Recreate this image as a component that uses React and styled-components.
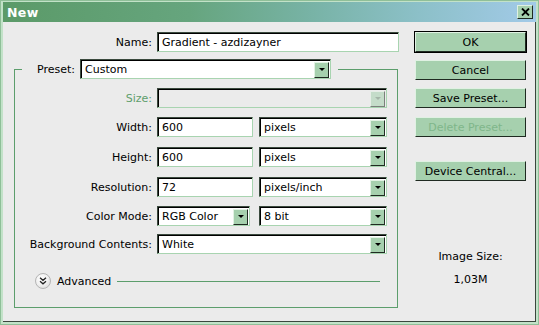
import React from 'react';
import styled, { createGlobalStyle } from 'styled-components';

const GlobalStyle = createGlobalStyle`
  html, body {
    margin: 0;
    padding: 0;
    background: #ebebeb;
  }
  body {
    font-family: "DejaVu Sans", "Liberation Sans", sans-serif;
    font-size: 11px;
    color: #000;
  }
`;

const Window = styled.div`
  width: 539px;
  height: 325px;
  box-sizing: border-box;
  border: 1px solid #8fbf98;
  background: #c2e2c8;
  padding: 1px 2px 2px 2px;
  display: flex;
  flex-direction: column;
`;

const TitleBar = styled.div`
  height: 20px;
  flex: none;
  display: flex;
  align-items: center;
  padding: 0 3px 0 4px;
  background: linear-gradient(to right, #5b9a68 0%, #66a57e 35%, #78b3a6 58%, #8cc0c8 78%, #a2cae8 100%);
`;

const Title = styled.span`
  flex: 1;
  color: #fff;
  font-weight: bold;
  font-size: 12.5px;
  letter-spacing: 0.4px;
`;

const CloseBox = styled.div`
  width: 16px;
  height: 14px;
  box-sizing: border-box;
  background: #a6d0ae;
  border: 1px solid;
  border-color: #dff0e2 #1f2a21 #1f2a21 #dff0e2;
  display: flex;
  align-items: center;
  justify-content: center;
`;

const Body = styled.div`
  flex: 1;
  display: flex;
  background: #ebebeb;
  border-right: 1px solid #3a463c;
  border-bottom: 1px solid #3a463c;
`;

const LeftPane = styled.div`
  width: 397px;
  padding-top: 10px;
  display: flex;
  flex-direction: column;
`;

const RightPane = styled.div`
  flex: 1;
  padding: 10px 0 0 15px;
  display: flex;
  flex-direction: column;
`;

const Row = styled.div`
  display: flex;
  align-items: center;
  height: 20px;
  gap: 5px;
  margin-top: ${p => p.mt || 0}px;
`;

const Label = styled.span`
  width: ${p => p.w}px;
  flex: none;
  text-align: right;
  white-space: nowrap;
  color: ${p => (p.disabled ? '#5e9e6c' : '#000')};
`;

const Field = styled.div`
  width: ${p => p.w}px;
  height: 20px;
  flex: none;
  box-sizing: border-box;
  display: flex;
  align-items: center;
  background: ${p => (p.disabled ? '#ebebeb' : '#fff')};
  border: 1px solid;
  border-color: #3b4a3e #a8d4b0 #a8d4b0 #3b4a3e;
  box-shadow: inset 1px 1px 0 #000;
  white-space: nowrap;
  overflow: hidden;
`;

const FieldText = styled.span`
  flex: 1;
  padding-left: 4px;
  padding-top: 1px;
`;

const ArrowBox = styled.div`
  width: 15px;
  height: 16px;
  margin-right: 1px;
  margin-top: 1px;
  box-sizing: border-box;
  flex: none;
  background: #a6d0ae;
  border: 1px solid;
  border-color: #e2f2e4 #1f2a21 #1f2a21 #e2f2e4;
  display: flex;
  align-items: center;
  justify-content: center;
  opacity: ${p => (p.disabled ? 0.55 : 1)};
`;

const Arrow = styled.div`
  width: 0;
  height: 0;
  border-left: 3px solid transparent;
  border-right: 3px solid transparent;
  border-top: 3px solid ${p => (p.disabled ? '#6a8a70' : '#000')};
`;

const Group = styled.fieldset`
  margin: 7px 0 0 11px;
  width: 384px;
  box-sizing: border-box;
  border: 1px solid #5c9e6c;
  padding: 9px 10px 18px 0;
  min-width: 0;
  display: flex;
  flex-direction: column;
`;

const Legend = styled.legend`
  margin-left: 7px;
  padding: 0 7px 0 0;
  display: flex;
  align-items: center;
  gap: 5px;
  height: 20px;
`;

const Pair = styled.div`
  display: flex;
  gap: ${p => p.gap}px;
`;

const AdvancedRow = styled.div`
  display: flex;
  align-items: center;
  height: 16px;
  margin-top: 19px;
  padding-left: 20px;
`;

const RoundToggle = styled.div`
  width: 16px;
  height: 16px;
  box-sizing: border-box;
  border-radius: 50%;
  border: 1px solid #b4b4b4;
  background: radial-gradient(circle at 40% 35%, #ffffff 0%, #f0f0f0 50%, #d4d4d4 100%);
  display: flex;
  align-items: center;
  justify-content: center;
`;

const AdvancedText = styled.span`
  margin-left: 6px;
`;

const Rule = styled.div`
  flex: 1;
  height: 1px;
  background: #5c9e6c;
  margin: 1px 7px 0 6px;
`;

const Button = styled.div`
  width: 111px;
  height: 20px;
  box-sizing: border-box;
  display: flex;
  align-items: center;
  justify-content: center;
  background: #a6d0ae;
  border: 1px solid;
  border-color: #e0f1e3 #1f2a21 #1f2a21 #e0f1e3;
  box-shadow: ${p => (p.primary ? '0 0 0 1px #000' : 'none')};
  color: ${p => (p.disabled ? '#7fb68a' : '#000')};
  margin-top: ${p => p.mt || 0}px;
  padding-top: 1px;
`;

const Info = styled.div`
  width: 111px;
  text-align: center;
  margin-top: ${p => p.mt}px;
`;

const Select = ({ w, value, disabled }) => (
  <Field w={w} disabled={disabled}>
    <FieldText>{value}</FieldText>
    <ArrowBox disabled={disabled}>
      <Arrow disabled={disabled} />
    </ArrowBox>
  </Field>
);

const Input = ({ w, value }) => (
  <Field w={w}>
    <FieldText>{value}</FieldText>
  </Field>
);

const App = () => (
  <>
    <GlobalStyle />
    <Window>
      <TitleBar>
        <Title>New</Title>
        <CloseBox>
          <svg width="9" height="8" viewBox="0 0 9 8">
            <path d="M1 0.5 L8 7.5 M8 0.5 L1 7.5" stroke="#000" strokeWidth="1.8" />
          </svg>
        </CloseBox>
      </TitleBar>
      <Body>
        <LeftPane>
          <Row>
            <Label w={149}>Name:</Label>
            <Input w={242} value="Gradient - azdizayner" />
          </Row>
          <Group>
            <Legend>
              <Label w={53}>Preset:</Label>
              <Select w={251} value="Custom" />
            </Legend>
            <Row>
              <Label w={137} disabled>Size:</Label>
              <Select w={230} value="" disabled />
            </Row>
            <Row mt={9}>
              <Label w={137}>Width:</Label>
              <Pair gap={6}>
                <Input w={96} value="600" />
                <Select w={128} value="pixels" />
              </Pair>
            </Row>
            <Row mt={10}>
              <Label w={137}>Height:</Label>
              <Pair gap={6}>
                <Input w={96} value="600" />
                <Select w={128} value="pixels" />
              </Pair>
            </Row>
            <Row mt={10}>
              <Label w={137}>Resolution:</Label>
              <Pair gap={6}>
                <Input w={96} value="72" />
                <Select w={128} value="pixels/inch" />
              </Pair>
            </Row>
            <Row mt={9}>
              <Label w={137}>Color Mode:</Label>
              <Pair gap={9}>
                <Select w={93} value="RGB Color" />
                <Select w={128} value="8 bit" />
              </Pair>
            </Row>
            <Row mt={8}>
              <Label w={137}>Background Contents:</Label>
              <Select w={230} value="White" />
            </Row>
            <AdvancedRow>
              <RoundToggle>
                <svg width="8" height="8" viewBox="0 0 8 8">
                  <path d="M1 0.8 L4 3.3 L7 0.8 M1 4.3 L4 6.8 L7 4.3" fill="none" stroke="#222" strokeWidth="1.3" />
                </svg>
              </RoundToggle>
              <AdvancedText>Advanced</AdvancedText>
              <Rule />
            </AdvancedRow>
          </Group>
        </LeftPane>
        <RightPane>
          <Button primary>OK</Button>
          <Button mt={8}>Cancel</Button>
          <Button mt={8}>Save Preset...</Button>
          <Button mt={9} disabled>Delete Preset...</Button>
          <Button mt={24}>Device Central...</Button>
          <Info mt={69}>Image Size:</Info>
          <Info mt={10}>1,03M</Info>
        </RightPane>
      </Body>
    </Window>
  </>
);

export default App;
